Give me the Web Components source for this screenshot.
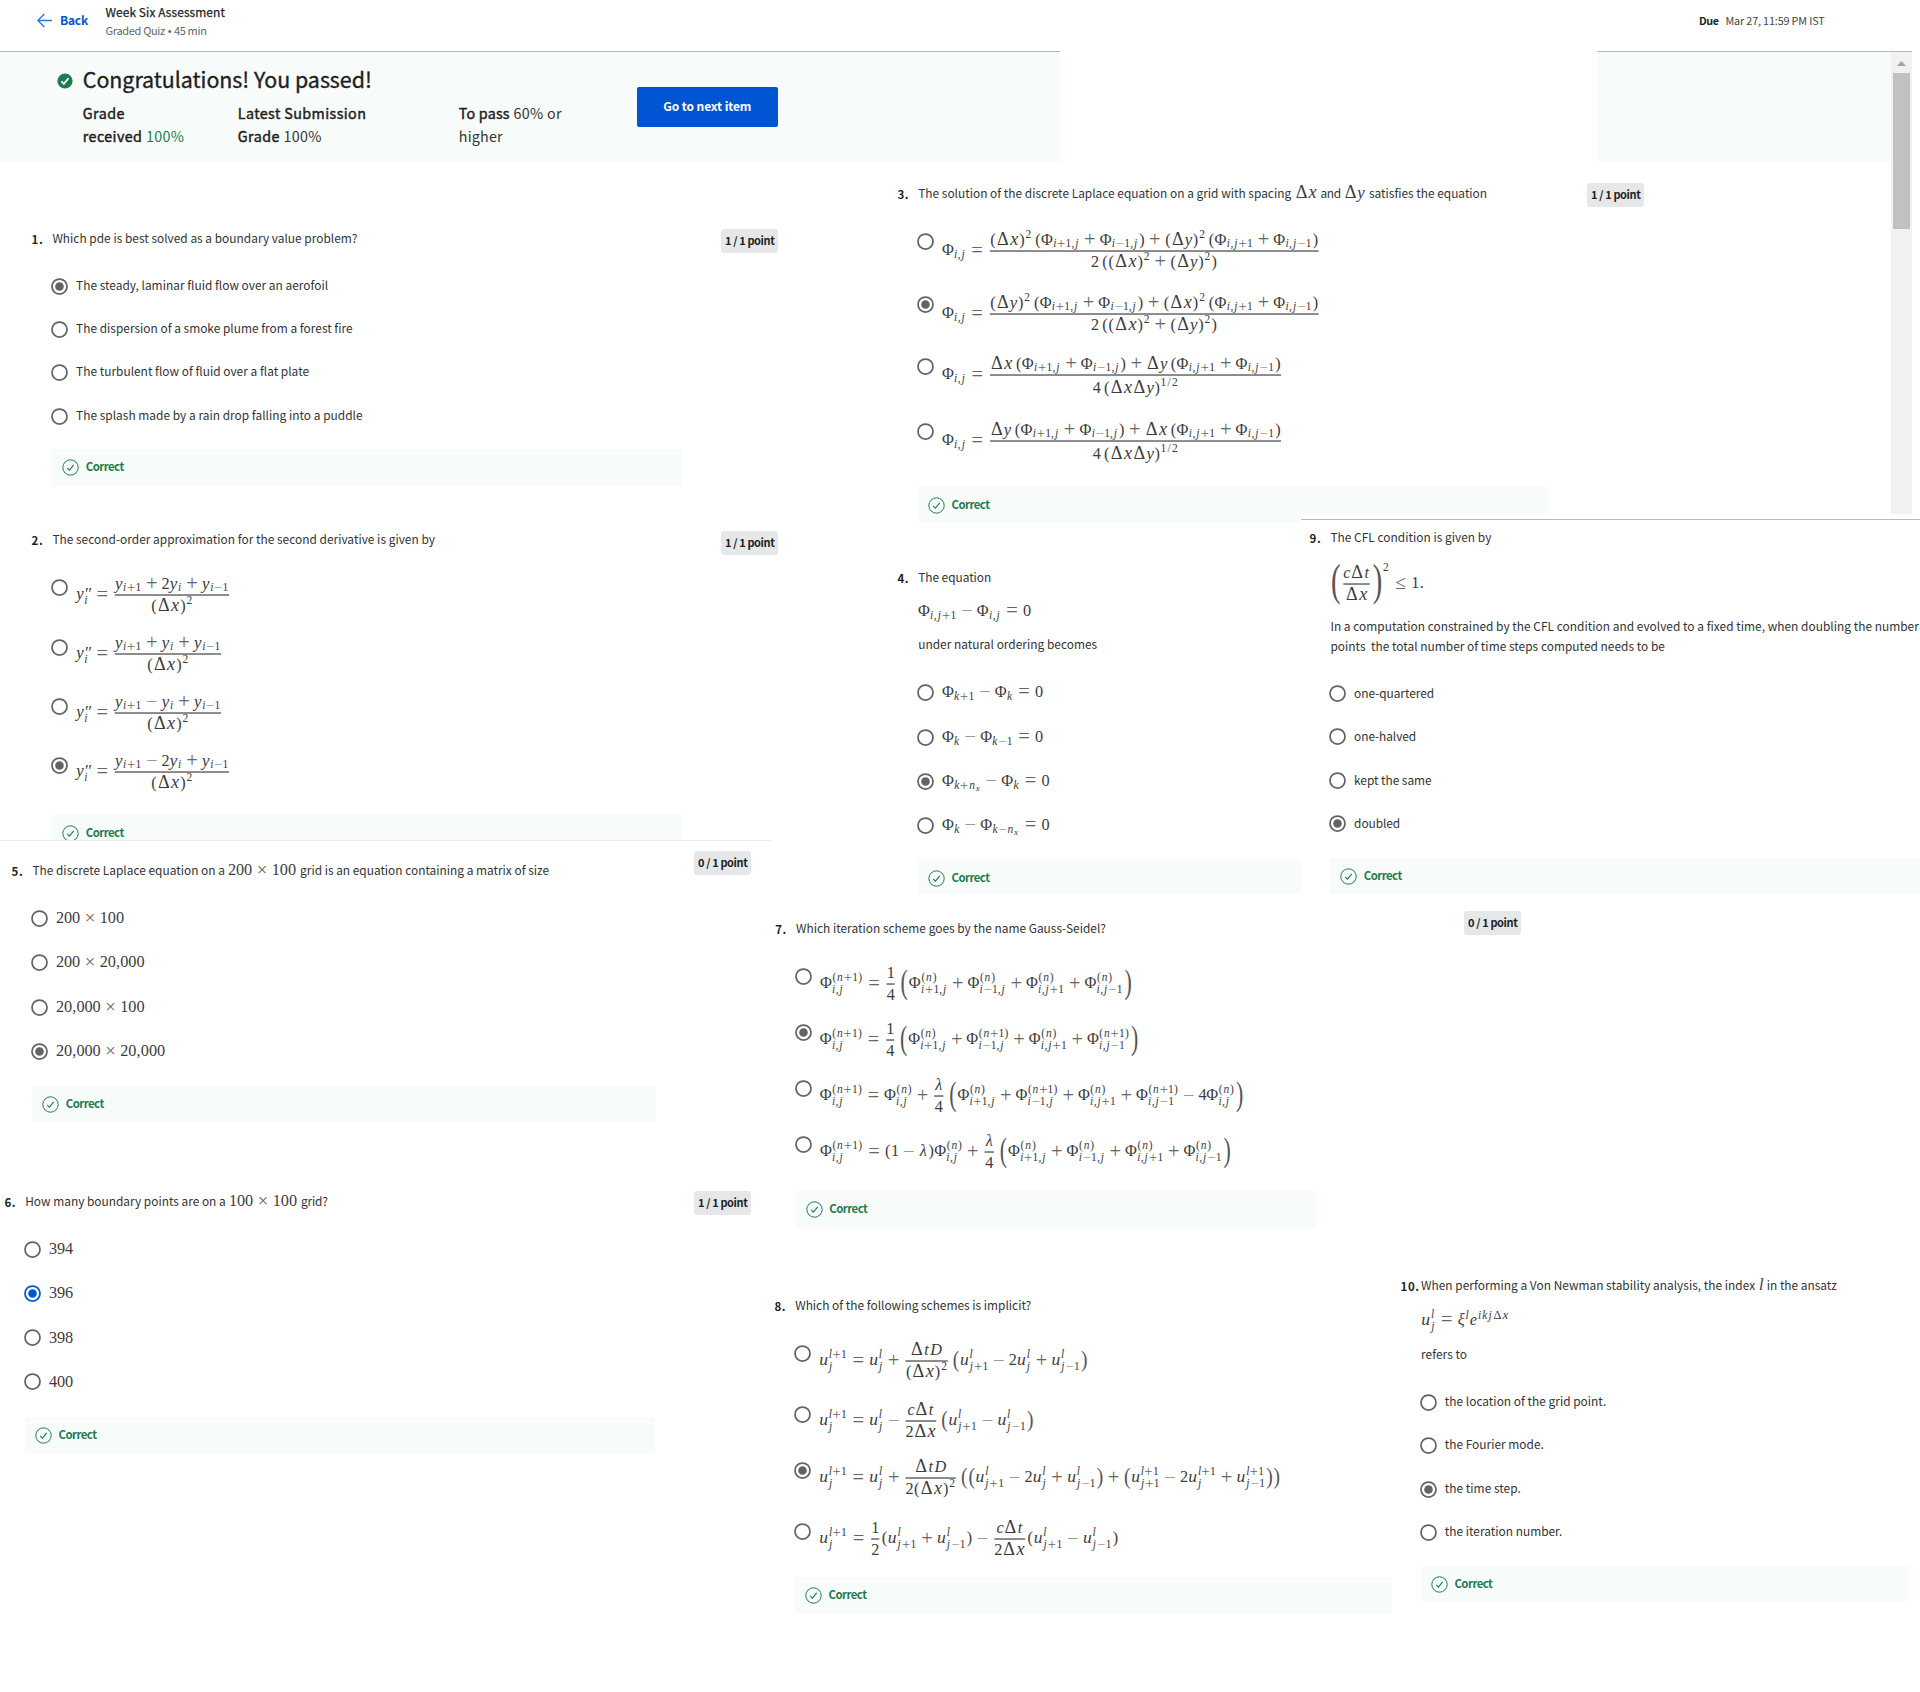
<!DOCTYPE html>
<html lang="en">
<head>
<meta charset="utf-8">
<title>Week Six Assessment</title>
<style>
html,body{margin:0;padding:0;background:#fff}
body{font-family:"Noto Sans CJK SC","Noto Sans",sans-serif;font-size:11.9px;color:#333;width:1920px;height:1692px;overflow:hidden}
.main{display:flex;align-items:flex-start}
.left{width:774px;flex:none}
.right{width:1146px;flex:none}
.row{display:flex;align-items:flex-start}
.row.mid{margin-top:-9px}
.rule{height:1px;width:771px;background:#ededee}
.nine{width:619px;height:380px;background:#fff;padding-top:5px;box-sizing:border-box;position:relative}
.nine .line{height:1px;background:#b9b9b9}
</style>
</head>
<body>
<quiz-header></quiz-header>
<quiz-banner></quiz-banner>
<div class="main">
  <div class="left">
    <quiz-question n="1." points="1 / 1 point" style="--x:52.4px;width:778px;margin-top:67px;--bw:630px;--bh:37px;--dy:2px">
      <fit-text slot="prompt" w="305">Which pde is best solved as a boundary value problem?</fit-text>
      <quiz-option checked style="height:43px"><fit-text w="252">The steady, laminar fluid flow over an aerofoil</fit-text></quiz-option>
      <quiz-option style="height:43px"><fit-text w="276.5">The dispersion of a smoke plume from a forest fire</fit-text></quiz-option>
      <quiz-option style="height:43.9px"><fit-text w="233">The turbulent flow of fluid over a flat plate</fit-text></quiz-option>
      <quiz-option style="height:41.3px"><fit-text w="286.5">The splash made by a rain drop falling into a puddle</fit-text></quiz-option>
    </quiz-question>
    <quiz-question n="2." points="1 / 1 point" style="--x:52.4px;width:778px;margin-top:44px;--bw:630px;--bh:25px;--dy:3px">
      <fit-text slot="prompt" w="382.5">The second-order approximation for the second derivative is given by</fit-text>
      <quiz-option ay="7.4" style="height:60px"><tex-math w="155">y_i^{′′}=\frac{y_{i+1}+2y_i+y_{i−1}}{(Δx)^2}</tex-math></quiz-option>
      <quiz-option ay="6.4" style="height:59px"><tex-math w="147">y_i^{′′}=\frac{y_{i+1}+y_i+y_{i−1}}{(Δx)^2}</tex-math></quiz-option>
      <quiz-option ay="6.4" style="height:59px"><tex-math w="147">y_i^{′′}=\frac{y_{i+1}−y_i+y_{i−1}}{(Δx)^2}</tex-math></quiz-option>
      <quiz-option checked ay="6.6" style="height:58.2px"><tex-math w="155">y_i^{′′}=\frac{y_{i+1}−2y_i+y_{i−1}}{(Δx)^2}</tex-math></quiz-option>
    </quiz-question>
    <div class="rule"></div>
    <quiz-question n="5." points="0 / 1 point" style="--x:32.4px;width:751px;margin-top:20px;--bw:624px;--bh:36px;--dy:-8px">
      <fit-text slot="prompt" w="192.5">The discrete Laplace equation on a</fit-text><tex-math slot="prompt" w="68">200×100</tex-math><fit-text slot="prompt" w="249">grid is an equation containing a matrix of size</fit-text>
      <quiz-option ay="1" style="height:44px"><tex-math w="68">200×100</tex-math></quiz-option>
      <quiz-option ay="1" style="height:45px"><tex-math w="88.5">200×20,000</tex-math></quiz-option>
      <quiz-option ay="1" style="height:44px"><tex-math w="88.5">20,000×100</tex-math></quiz-option>
      <quiz-option checked ay="1" style="height:43.2px"><tex-math w="109">20,000×20,000</tex-math></quiz-option>
    </quiz-question>
    <quiz-question n="6." points="1 / 1 point" style="--x:25.2px;width:751px;margin-top:70px;--bw:630px;--bh:36px;--dy:1px">
      <fit-text slot="prompt" w="200.5">How many boundary points are on a</fit-text><tex-math slot="prompt" w="68">100×100</tex-math><fit-text slot="prompt" w="27">grid?</fit-text>
      <quiz-option ay="1" style="height:44px"><tex-math w="24">394</tex-math></quiz-option>
      <quiz-option checked blue ay="1" style="height:44.7px"><tex-math w="24">396</tex-math></quiz-option>
      <quiz-option ay="1" style="height:44px"><tex-math w="24">398</tex-math></quiz-option>
      <quiz-option ay="1" style="height:43.5px"><tex-math w="24">400</tex-math></quiz-option>
    </quiz-question>
  </div>
  <div class="right">
    <quiz-question n="3." points="1 / 1 point" style="--x:144.2px;width:870px;margin-top:22px;--bw:630px;--bh:36px;--dy:1px">
      <fit-text slot="prompt" w="373">The solution of the discrete Laplace equation on a grid with spacing</fit-text><tex-math slot="prompt" w="22">Δx</tex-math><fit-text slot="prompt" w="20.5">and</fit-text><tex-math slot="prompt" w="21">Δy</tex-math><fit-text slot="prompt" w="118">satisfies the equation</fit-text>
      <quiz-option ay="9.4" style="height:63px"><tex-math w="378.5">Φ_{i,j}=\frac{(Δx)^2\,(Φ_{i+1,j}+Φ_{i−1,j})+(Δy)^2\,(Φ_{i,j+1}+Φ_{i,j−1})}{2\,((Δx)^2+(Δy)^2)}</tex-math></quiz-option>
      <quiz-option checked ay="9.4" style="height:62px"><tex-math w="378.5">Φ_{i,j}=\frac{(Δy)^2\,(Φ_{i+1,j}+Φ_{i−1,j})+(Δx)^2\,(Φ_{i,j+1}+Φ_{i,j−1})}{2\,((Δx)^2+(Δy)^2)}</tex-math></quiz-option>
      <quiz-option ay="8.7" style="height:65px"><tex-math w="341" deep>Φ_{i,j}=\frac{Δx\,(Φ_{i+1,j}+Φ_{i−1,j})+Δy\,(Φ_{i,j+1}+Φ_{i,j−1})}{4\,(ΔxΔy)\H{1/2}}</tex-math></quiz-option>
      <quiz-option ay="9.4" style="height:64.2px"><tex-math w="341" deep>Φ_{i,j}=\frac{Δy\,(Φ_{i+1,j}+Φ_{i−1,j})+Δx\,(Φ_{i,j+1}+Φ_{i,j−1})}{4\,(ΔxΔy)\H{1/2}}</tex-math></quiz-option>
    </quiz-question>
    <div class="row mid">
      <quiz-question n="4." style="--x:144.2px;width:527px;margin-top:54px;--bw:383px;--bh:33px">
        <fit-text slot="prompt" w="73">The equation</fit-text>
        <tex-math slot="extra" w="113" style="margin-top:14px">Φ_{i,j+1}−Φ_{i,j}=0</tex-math>
        <fit-text slot="extra" w="179" style="margin-top:13px">under natural ordering becomes</fit-text>
        <quiz-option ay=".3" style="height:45px"><tex-math w="101">Φ_{k+1}−Φ_k=0</tex-math></quiz-option>
        <quiz-option ay=".3" style="height:44px"><tex-math w="101">Φ_k−Φ_{k−1}=0</tex-math></quiz-option>
        <quiz-option checked ay=".3" style="height:44px"><tex-math w="107.5">Φ_{k+n_x}−Φ_k=0</tex-math></quiz-option>
        <quiz-option ay=".3" style="height:43.2px"><tex-math w="107.5">Φ_k−Φ_{k−n_x}=0</tex-math></quiz-option>
      </quiz-question>
      <div class="nine">
        <div class="line"></div>
        <quiz-question n="9." style="--x:29.4px;width:619px;margin-top:8px;--bw:590px;--bh:36px;--mt:27.8px">
          <fit-text slot="prompt" w="161">The CFL condition is given by</fit-text>
          <tex-math slot="extra" w="94" style="margin-top:14px">\P{(}{9.4}\frac{cΔt}{Δx}\P{)}{9.4}\U{2}≤1.</tex-math>
          <fit-text slot="extra" w="588.5" lh="20.5" style="margin-top:10.7px">In a computation constrained by the CFL condition and evolved to a fixed time, when doubling the number</fit-text>
          <fit-text slot="extra" w="334.5" lh="20.5">points&nbsp; the total number of time steps computed needs to be</fit-text>
          <quiz-option style="height:43px"><fit-text w="80">one-quartered</fit-text></quiz-option>
          <quiz-option style="height:44px"><fit-text w="62">one-halved</fit-text></quiz-option>
          <quiz-option style="height:43px"><fit-text w="77.5">kept the same</fit-text></quiz-option>
          <quiz-option checked style="height:42.5px"><fit-text w="46">doubled</fit-text></quiz-option>
        </quiz-question>
      </div>
    </div>
    <quiz-question n="7." points="0 / 1 point" style="--x:22px;width:747px;margin-top:25px;--bw:520px;--bh:37px;--dy:-6px">
      <fit-text slot="prompt" w="310">Which iteration scheme goes by the name Gauss-Seidel?</fit-text>
      <quiz-option ay="7.6" style="height:56px"><tex-math w="313">Φ_{i,j}^{(n+1)}=\frac{1}{4}\,\P{(}{7.2}Φ_{i+1,j}^{(n)}+Φ_{i−1,j}^{(n)}+Φ_{i,j+1}^{(n)}+Φ_{i,j−1}^{(n)}\P{)}{7.2}</tex-math></quiz-option>
      <quiz-option checked ay="7.3" style="height:56px"><tex-math w="319.5">Φ_{i,j}^{(n+1)}=\frac{1}{4}\,\P{(}{7.2}Φ_{i+1,j}^{(n)}+Φ_{i−1,j}^{(n+1)}+Φ_{i,j+1}^{(n)}+Φ_{i,j−1}^{(n+1)}\P{)}{7.2}</tex-math></quiz-option>
      <quiz-option ay="7.6" style="height:56px"><tex-math w="424.5">Φ_{i,j}^{(n+1)}=Φ_{i,j}^{(n)}+\frac{λ}{4}\,\P{(}{7.2}Φ_{i+1,j}^{(n)}+Φ_{i−1,j}^{(n+1)}+Φ_{i,j+1}^{(n)}+Φ_{i,j−1}^{(n+1)}−4Φ_{i,j}^{(n)}\P{)}{7.2}</tex-math></quiz-option>
      <quiz-option ay="7.6" style="height:55.2px"><tex-math w="412">Φ_{i,j}^{(n+1)}=(1−λ)Φ_{i,j}^{(n)}+\frac{λ}{4}\,\P{(}{7.2}Φ_{i+1,j}^{(n)}+Φ_{i−1,j}^{(n)}+Φ_{i,j+1}^{(n)}+Φ_{i,j−1}^{(n)}\P{)}{7.2}</tex-math></quiz-option>
    </quiz-question>
    <div class="row">
      <quiz-question n="8." style="--x:21.2px;width:617.5px;margin-top:68px;--bw:596.5px;--bh:36.5px;--mt:29.5px">
        <fit-text slot="prompt" w="236">Which of the following schemes is implicit?</fit-text>
        <quiz-option ay="7.5" style="height:60.3px"><tex-math w="269">u_j^{l+1}=u_j^l+\frac{ΔtD}{(Δx)^2}\,\P{(}{5}u_{j+1}^l−2u_j^l+u_{j−1}^l\P{)}{5}</tex-math></quiz-option>
        <quiz-option ay="7.2" style="height:56px"><tex-math w="215">u_j^{l+1}=u_j^l−\frac{cΔt}{2Δx}\,\P{(}{5}u_{j+1}^l−u_{j−1}^l\P{)}{5}</tex-math></quiz-option>
        <quiz-option checked ay="7.7" style="height:61px"><tex-math w="461.5">u_j^{l+1}=u_j^l+\frac{ΔtD}{2(Δx)^2}\,\P{(}{5}\P{(}{5}u_{j+1}^l−2u_j^l+u_{j−1}^l\P{)}{5}+\P{(}{5}u_{j+1}^{l+1}−2u_j^{l+1}+u_{j−1}^{l+1}\P{)}{5}\P{)}{5}</tex-math></quiz-option>
        <quiz-option ay="7.4" style="height:54.2px"><tex-math w="299.5">u_j^{l+1}=\frac{1}{2}(u_{j+1}^l+u_{j−1}^l)−\frac{cΔt}{2Δx}(u_{j+1}^l−u_{j−1}^l)</tex-math></quiz-option>
      </quiz-question>
      <quiz-question n="10." style="--x:29.6px;--nx:20.5px;width:516px;margin-top:48px;--bw:487px;--bh:35px">
        <fit-text slot="prompt" w="334">When performing a Von Newman stability analysis, the index</fit-text><tex-math slot="prompt" w="4.5">l</tex-math><fit-text slot="prompt" w="70">in the ansatz</fit-text>
        <tex-math slot="extra" w="88.5" style="margin-top:15.5px">u_j^l=ξ^le^{ikjΔx}</tex-math>
        <fit-text slot="extra" w="46" style="margin-top:13.5px">refers to</fit-text>
        <quiz-option style="height:43px"><fit-text w="161.5">the location of the grid point.</fit-text></quiz-option>
        <quiz-option style="height:44px"><fit-text w="99">the Fourier mode.</fit-text></quiz-option>
        <quiz-option checked style="height:43px"><fit-text w="76">the time step.</fit-text></quiz-option>
        <quiz-option style="height:42.2px"><fit-text w="117.5">the iteration number.</fit-text></quiz-option>
      </quiz-question>
    </div>
  </div>
</div>
<script>
/* One line of text spaced out to a given width. */
class FitText extends HTMLElement{
  connectedCallback(){
    const r=this.attachShadow({mode:'open'});
    const lh=+(this.getAttribute('lh')||20);
    r.innerHTML='<style>:host{display:block;white-space:nowrap;line-height:'+(lh-2)+'px;padding-bottom:2px;flex:none}span{display:inline-block;vertical-align:top}</style><span><slot></slot></span>';
    const s=r.querySelector('span'),w=+this.getAttribute('w');
    const n=this.textContent.length,nat=s.getBoundingClientRect().width;
    if(w&&nat)s.style.letterSpacing=((w-nat)/n).toFixed(3)+'px';
    if(w&&this.getAttribute('slot')==='prompt')this.style.width=w+'px';
  }
}

/* Small formula typesetter: Computer-Modern advance widths, glyphs set as text. */
const ADV={x:.572,y:.49,u:.572,i:.345,j:.412,k:.521,n:.6,c:.433,t:.361,D:.828,l:.298,e:.466,'ξ':.438,'λ':.583,
 'Φ':.722,'Δ':.833,'(':.389,')':.389,'+':.778,'−':.778,'=':.778,'≤':.778,'×':.778,',':.278,'.':.278,'/':.5,'′':.275};
const GROW={'×':1.15,'+':1.26,'−':1.26,'=':1.26,'≤':1.2,'Δ':1.12,x:1.12,u:1.08,y:1.04,'′':1.5};
const EM=16.24;
class TexMath extends HTMLElement{
  connectedCallback(){
    const src=this.textContent;
    const list=this.layout(src,1);
    const f=(+this.getAttribute('w')||list.w*EM)/(list.w*EM);
    const frac=src.includes('frac');
    const H=frac?44:20, W=list.w*EM*f, base=H/2+.25*EM+(frac?.4:0);
    let t='',extra='';
    for(const g of list.items){
      const x=(g.x*EM*f).toFixed(2), y=base-g.y*EM;
      if(g.k==='bar'){extra+=`<rect x="${x}" y="${H/2-.6}" width="${(g.w*EM*f).toFixed(2)}" height="1.25" fill="#4a4a4a"/>`;continue}
      if(g.k==='big'){
        const fs=g.h*5*.95, cx=(g.x+g.w/2)*EM*f;
        extra+=`<text transform="translate(${cx.toFixed(2)} ${(H/2+fs*.25).toFixed(2)}) scale(${(g.h>6?.64:.82)} 1)" font-size="${fs}" text-anchor="middle" fill="#555">${g.c}</text>`;continue}
      const op='+−=≤×'.includes(g.c), k=GROW[g.c]||1;
      const fs=EM*g.s*k;
      let yy=op?y+(k-1)*.25*EM*g.s:y;
      if(g.c==='′')yy=base;
      const it=/[a-zA-Zξλ′]/.test(g.c)?' font-style="italic"':'';
      const fill=op?(g.c==='−'?' fill="#999"':' fill="#666"'):'';
      t+=`<tspan x="${((g.x+g.w/2)*EM*f).toFixed(2)}" y="${yy.toFixed(2)}" font-size="${fs.toFixed(2)}"${it}${fill}>${g.c}</tspan>`;
    }
    this.attachShadow({mode:'open'}).innerHTML=`<style>:host{display:block;flex:none}svg{display:block;overflow:visible;font-family:"Liberation Serif",serif;fill:#3c3c3c}</style><svg width="${W.toFixed(1)}" height="${H}"><text text-anchor="middle">${t}</text>${extra}</svg>`;
  }
  arg(s,p){
    if(s[p]!=='{')return[s[p],p+1];
    let d=0,q=p;do{if(s[q]==='{')d++;if(s[q]==='}')d--;q++}while(d);
    return[s.slice(p+1,q-1),q];
  }
  layout(s,size){
    const items=[];let x=0,p=0;
    const put=(b,dx,dy)=>b.items.forEach(g=>items.push({...g,x:g.x+dx,y:(g.y||0)+dy}));
    while(p<s.length){
      const c=s[p];
      if(s.startsWith('\\frac',p)){
        let a,b;[a,p]=this.arg(s,p+5);[b,p]=this.arg(s,p);
        const N=this.layout(a,size),D=this.layout(b,size),w=Math.max(N.w,D.w);
        const deep=this.hasAttribute('deep');
        put(N,x+.12+(w-N.w)/2,.667);put(D,x+.12+(w-D.w)/2,deep?-.86:-.7);
        items.push({k:'bar',x:x+.12,y:0,w});x+=w+.24;continue;
      }
      if(s.startsWith('\\,',p)){x+=.167;p+=2;continue}
      if(s.startsWith('\\P',p)){
        let a,b;[a,p]=this.arg(s,p+2);[b,p]=this.arg(s,p);
        const w=+b>9?.7:+b>6?.597:.458;
        items.push({k:'big',c:a,x,w,h:+b,y:0});x+=w;continue;
      }
      if(s.startsWith('\\H',p)||s.startsWith('\\U',p)){
        const up=s[p+1]==='U';let a;[a,p]=this.arg(s,p+2);
        const b=this.layout(a,size*.707);put(b,x,up?1.1:.46);x+=b.w+.05;continue;
      }
      if(c==='_'||c==='^'){
        let sub=null,sup=null,a;
        while(s[p]==='_'||s[p]==='^'){
          const k=s[p];[a,p]=this.arg(s,p+1);
          const b=this.layout(a,size*.707);
          if(k==='_')sub=b;else sup=b;
        }
        if(sub)put(sub,x,-(sup?.28:.17)*size);
        if(sup)put(sup,x+.03,(sub?.45:.4)*size);
        x+=Math.max(sub?sub.w:0,sup?sup.w+.03:0)+.05*size;continue;
      }
      const bin='+−×'.includes(c),rel='=≤'.includes(c);
      const sp=size<1?0:bin?.222:rel?.278:0, w=(ADV[c]||.5)*size;
      x+=sp;items.push({c,x,y:0,w,s:size});x+=w+sp;p++;
    }
    return{items,w:x};
  }
}

class QuizOption extends HTMLElement{
  connectedCallback(){
    const on=this.hasAttribute('checked'),col=this.hasAttribute('blue')?'#0056d2':'#636363';
    const f=this.querySelector('tex-math');
    const top=f?8.5+(+this.getAttribute('ay')||0)-(f.textContent.includes('frac')?22:10):-1.7;
    this.attachShadow({mode:'open'}).innerHTML=`<style>:host{display:flex;align-items:flex-start}
    svg{width:17px;height:17px;flex:none;margin-left:-1.5px}.l{margin-left:${f?8.6:8.2}px;margin-top:${top}px}</style>
    <svg viewBox="0 0 17 17"><circle cx="8.5" cy="8.5" r="7.5" fill="#fff" stroke="${col}" stroke-width="1.75"/>${on?`<circle cx="8.5" cy="8.5" r="4.3" fill="${col}"/>`:''}</svg><div class="l"><slot></slot></div>`;
  }
}

class QuizQuestion extends HTMLElement{
  connectedCallback(){
    const pts=this.getAttribute('points');
    this.attachShadow({mode:'open'}).innerHTML=`<style>
    :host{display:block;box-sizing:border-box;padding-left:var(--x)}
    .head{display:flex;height:20px;align-items:flex-start;margin-left:calc(-1*var(--nx,20.8px));line-height:20px}
    .n{width:var(--nx,20.8px);flex:none;font-weight:700;font-size:11.5px;color:#1f1f1f;letter-spacing:.5px}
    .p{display:flex;gap:3.6px}
    .pts{margin-left:auto;margin-top:calc(-2px + var(--dy,0px));width:57px;height:24px;border-radius:3px;background:#e5e7e8;font-weight:700;font-size:11px;color:#1f1f1f;flex:none}
    .o{margin-top:var(--mt,28.8px)}
    .bar{width:var(--bw);height:var(--bh);background:#f7fbfa;overflow:hidden;display:flex;align-items:flex-start;color:#1d7c50;font-weight:700;font-size:11.4px}
    .bar svg{flex:none;width:17px;height:17px;margin:10px 0 0 10px}.bar span{margin-left:6.3px;line-height:20px;margin-top:8px}
    </style>
    <div class="head"><span class="n">${this.getAttribute('n')}</span><div class="p"><slot name="prompt"></slot></div>${pts?`<span class="pts"><fit-text w="49.5" lh="25" style="margin-left:4px;padding-bottom:0">${pts}</fit-text></span>`:''}</div>
    <slot name="extra"></slot>
    <div class="o"><slot></slot></div>
    <div class="bar"><svg viewBox="0 0 17 17" fill="none" stroke="#1d7c50"><circle cx="8.5" cy="8.5" r="7.7" stroke-width="1"/><path d="M5.2 8.9l2.2 2.3 4.3-5.3" stroke-width="1.1"/></svg><span><fit-text w="38">Correct</fit-text></span></div>`;
  }
}

class QuizHeader extends HTMLElement{
  connectedCallback(){
    this.attachShadow({mode:'open'}).innerHTML=`<style>
    :host{display:flex;height:51px;box-sizing:border-box;align-items:flex-start}
    .back{display:flex;margin-left:36.5px;margin-top:11px;width:69px;color:#0056d2;font-weight:700;font-size:12px;gap:8.5px}
    .back svg{width:15px;height:15px;margin-top:2px}
    .t{margin-top:3px;color:#1f1f1f}.t div{color:#666;margin-top:-2px}
    .due{display:flex;gap:7px;margin-left:auto;margin-right:95.5px;margin-top:11px;font-size:10.8px;color:#444}.due b{color:#1f1f1f}
    </style><div class="back"><svg viewBox="0 0 15 15" fill="none" stroke="#2b73dc" stroke-width="1.3"><path d="M15 7.5H1M7.3 1L.9 7.5 7.3 14"/></svg><fit-text w="28">Back</fit-text></div>
    <div class="t"><fit-text w="119.5" style="-webkit-text-stroke:.25px #1f1f1f">Week Six Assessment</fit-text><div><fit-text w="101" style="font-size:11px;font-family:'Noto Sans CJK SC'"><span>Graded Quiz</span><span style="font-family:'Liberation Sans'"> • </span><span>45 min</span></fit-text></div></div>
    <div class="due"><b><fit-text w="19.5">Due</fit-text></b><fit-text w="99">Mar 27, 11:59 PM IST</fit-text></div>`;
  }
}

class QuizBanner extends HTMLElement{
  connectedCallback(){
    this.attachShadow({mode:'open'}).innerHTML=`<style>
    :host{display:flex;height:111px;align-items:flex-start}
    .a{width:1060px;height:111px;border-top:1px solid #b9b9b9;background:#f7fbfa;box-sizing:border-box;display:flex}
    .ic{width:16px;height:16px;margin:21px 0 0 56.5px;flex:none}
    .c{margin-left:10.3px;width:554px;flex:none}
    h1{font-size:21.4px;font-weight:400;margin:12px 0 0;color:#1f1f1f;-webkit-text-stroke:.35px #1f1f1f}
    .g{display:flex;font-size:14.3px;color:#333;margin-top:6px}.g>div{flex:none}
    .w{display:flex;gap:3.6px}
    b{font-weight:400;color:#1f1f1f;-webkit-text-stroke:.45px #1f1f1f}.ok{color:#1d7c50}
    .btn{width:141px;height:40px;background:#0056d2;border-radius:2px;margin-top:35px;color:#fff;font-weight:700;font-size:12px;box-sizing:border-box;padding-left:26.5px}
    .b{width:294px;height:111px;border-top:1px solid #b9b9b9;background:#f7fbfa;box-sizing:border-box;margin-left:537px}
    .s{width:21px;height:463px;border-top:1px solid #b9b9b9;background:#f1f1f1;box-sizing:border-box;display:flex;flex-direction:column;align-items:center}
    .s svg{width:9px;height:5px;margin-top:9px}.s i{width:17px;height:156px;background:#c1c1c1;margin-top:7px}
    </style>
    <div class="a"><svg class="ic" viewBox="0 0 16 16"><circle cx="8" cy="8" r="7.6" fill="#1d7c50"/><path d="M4.4 8.4l2.4 2.5 4.7-5.6" fill="none" stroke="#fff" stroke-width="1.7"/></svg>
    <div class="c"><h1><fit-text w="289" lh="32">Congratulations! You passed!</fit-text></h1>
    <div class="g"><div style="width:155px"><b><fit-text w="42" lh="23">Grade</fit-text></b><div class="w"><b><fit-text w="59.5" lh="23">received</fit-text></b><fit-text class="ok" w="38.5" lh="23">100%</fit-text></div></div>
    <div style="width:221px"><b><fit-text w="128.5" lh="23">Latest Submission</fit-text></b><div class="w"><b><fit-text w="42" lh="23">Grade</fit-text></b><fit-text w="38.5" lh="23">100%</fit-text></div></div>
    <div><div class="w"><b><fit-text w="51" lh="23">To pass</fit-text></b><fit-text w="48.5" lh="23">60% or</fit-text></div><fit-text w="44" lh="23">higher</fit-text></div></div></div>
    <div class="btn"><fit-text w="88" lh="40">Go to next item</fit-text></div></div>
    <div class="b"></div><div class="s"><svg viewBox="0 0 9 5"><path d="M0 5L4.5 0 9 5z" fill="#a3a3a3"/></svg><i></i></div>`;
  }
}
customElements.define('fit-text',FitText);
customElements.define('tex-math',TexMath);
customElements.define('quiz-option',QuizOption);
customElements.define('quiz-question',QuizQuestion);
customElements.define('quiz-header',QuizHeader);
customElements.define('quiz-banner',QuizBanner);
</script>
</body>
</html>
